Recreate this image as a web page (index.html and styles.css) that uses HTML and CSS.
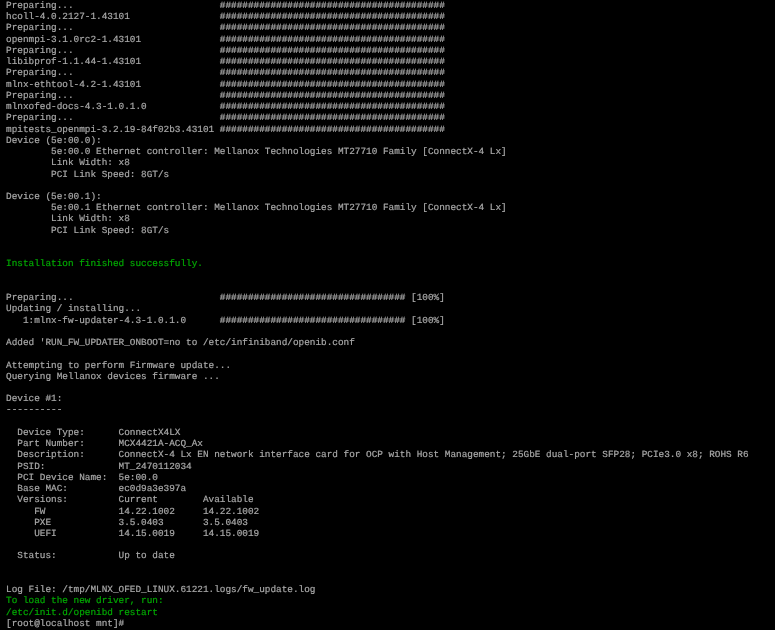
FILE: index.html
```html
<!DOCTYPE html>
<html lang="en">
<head>
<meta charset="utf-8">
<title>Console</title>
<link rel="stylesheet" href="styles.css">
</head>
<body>
<pre class="console">Preparing...                          ########################################
hcoll-4.0.2127-1.43101                ########################################
Preparing...                          ########################################
openmpi-3.1.0rc2-1.43101              ########################################
Preparing...                          ########################################
libibprof-1.1.44-1.43101              ########################################
Preparing...                          ########################################
mlnx-ethtool-4.2-1.43101              ########################################
Preparing...                          ########################################
mlnxofed-docs-4.3-1.0.1.0             ########################################
Preparing...                          ########################################
mpitests_openmpi-3.2.19-84f02b3.43101 ########################################
Device (5e:00.0):
        5e:00.0 Ethernet controller: Mellanox Technologies MT27710 Family [ConnectX-4 Lx]
        Link Width: x8
        PCI Link Speed: 8GT/s

Device (5e:00.1):
        5e:00.1 Ethernet controller: Mellanox Technologies MT27710 Family [ConnectX-4 Lx]
        Link Width: x8
        PCI Link Speed: 8GT/s


<span class="ok">Installation finished successfully.</span>


Preparing...                          ################################# [100%]
Updating / installing...
   1:mlnx-fw-updater-4.3-1.0.1.0      ################################# [100%]

Added 'RUN_FW_UPDATER_ONBOOT=no to /etc/infiniband/openib.conf

Attempting to perform Firmware update...
Querying Mellanox devices firmware ...

Device #1:
----------

  Device Type:      ConnectX4LX
  Part Number:      MCX4421A-ACQ_Ax
  Description:      ConnectX-4 Lx EN network interface card for OCP with Host Management; 25GbE dual-port SFP28; PCIe3.0 x8; ROHS R6
  PSID:             MT_2470112034
  PCI Device Name:  5e:00.0
  Base MAC:         ec0d9a3e397a
  Versions:         Current        Available
     FW             14.22.1002     14.22.1002
     PXE            3.5.0403       3.5.0403
     UEFI           14.15.0019     14.15.0019

  Status:           Up to date


Log File: /tmp/MLNX_OFED_LINUX.61221.logs/fw_update.log
<span class="ok">To load the new driver, run:
/etc/init.d/openibd restart</span>
[root@localhost mnt]#</pre>
</body>
</html>
```
FILE: styles.css
```css
html, body {
  margin: 0;
  height: 100%;
  background: #000;
  overflow: hidden;
}
.console {
  margin: 0;
  padding: 0 0 0 6px;
  color: #a8a8a8;
  font-family: "Liberation Mono", "DejaVu Sans Mono", monospace;
  font-size: 9.38px;
  line-height: 11.24px;
  text-rendering: geometricPrecision;
  font-variant-ligatures: none;
  white-space: pre;
  -webkit-text-stroke: 0.2px currentColor;
  filter: blur(0.2px);
}
.ok {
  color: #00a800;
}
```
